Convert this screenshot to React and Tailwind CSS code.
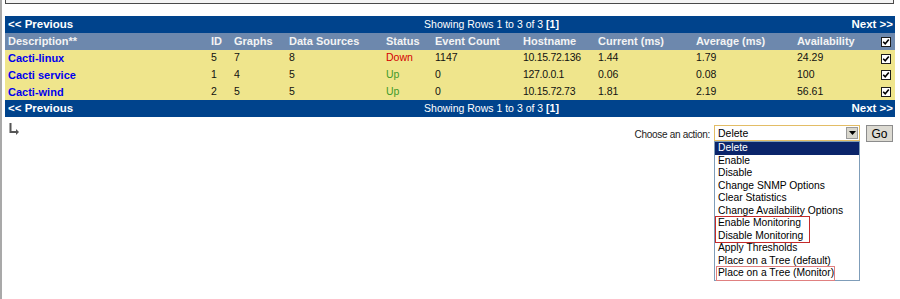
import { useState } from "react";

const rows = [
  { name: "Cacti-linux", id: 5, graphs: 7, ds: 8, status: "Down", events: "1147", host: "10.15.72.136", cur: "1.44", avg: "1.79", avail: "24.29" },
  { name: "Cacti service", id: 1, graphs: 4, ds: 5, status: "Up", events: "0", host: "127.0.0.1", cur: "0.06", avg: "0.08", avail: "100" },
  { name: "Cacti-wind", id: 2, graphs: 5, ds: 5, status: "Up", events: "0", host: "10.15.72.73", cur: "1.81", avg: "2.19", avail: "56.61" },
];

const actions = [
  "Delete",
  "Enable",
  "Disable",
  "Change SNMP Options",
  "Clear Statistics",
  "Change Availability Options",
];

const cols = [
  ["Description**", "w-[203px]"],
  ["ID", "w-[23px]"],
  ["Graphs", "w-[55px]"],
  ["Data Sources", "w-[97px]"],
  ["Status", "w-[49px]"],
  ["Event Count", "w-[88px]"],
  ["Hostname", "w-[75px]"],
  ["Current (ms)", "w-[98px]"],
  ["Average (ms)", "w-[101px]"],
  ["Availability", "w-[84px]"],
];

function Check() {
  return (
    <span className="inline-flex w-[10px] h-[10px] items-center justify-center bg-white border border-[#1c1c1c] align-middle">
      <svg width="8" height="8" viewBox="0 0 8 8">
        <path d="M1.2 3.8 L3.2 5.8 L6.8 1.6" fill="none" stroke="#000" strokeWidth="1.6" />
      </svg>
    </span>
  );
}

function NavBar() {
  return (
    <tr className="bg-[#00438C] h-[17px] text-white">
      <td colSpan={11} className="p-0">
        <div className="flex items-center h-[17px] whitespace-nowrap">
          <div className="w-[250px] pl-[3px] font-bold text-[11.5px]">&lt;&lt; Previous</div>
          <div className="w-[473px] text-center text-[10.5px]">
            Showing Rows 1 to 3 of 3 <span className="font-bold">[1]</span>
          </div>
          <div className="flex-1 text-right pr-[2px] font-bold text-[11.5px]">Next &gt;&gt;</div>
        </div>
      </td>
    </tr>
  );
}

export default function App() {
  const [selected] = useState(0);

  return (
    <div className="w-[900px] h-[299px] bg-white border-l-2 border-[#a9a9a9] pl-[3px] overflow-hidden font-['Liberation_Sans',Arial,sans-serif]">
      <div className="w-[889px] h-[4px] bg-[#f4f4f4] border-x border-b border-[#4a4a4a]" />

      <table className="mt-[12px] w-[890px] border-collapse table-fixed">
        <colgroup>
          {cols.map(([label, w]) => (
            <col key={label} className={w} />
          ))}
          <col className="w-[17px]" />
        </colgroup>
        <tbody>
          <NavBar />
          <tr className="bg-[#6D88AD] h-[17px] text-[#f4f4f4] text-[11px] font-bold text-left whitespace-nowrap">
            {cols.map(([label]) => (
              <th key={label} className="p-0 pl-[3px] font-bold">
                {label}
              </th>
            ))}
            <th className="p-0 pl-[3px] text-left">
              <Check />
            </th>
          </tr>
          {rows.map((r, i) => (
            <tr key={r.name} className={`bg-[#EFE58C] text-[10.5px] text-[#111] whitespace-nowrap ${i === 1 ? "h-[17px]" : "h-[16px]"}`}>
              <td className="p-0 pl-[3px] font-bold text-[11px] text-[#0000EE]">{r.name}</td>
              <td className="p-0 pl-[3px]">{r.id}</td>
              <td className="p-0 pl-[3px]">{r.graphs}</td>
              <td className="p-0 pl-[3px]">{r.ds}</td>
              <td className={`p-0 pl-[3px] ${r.status === "Down" ? "text-[#d40000]" : "text-[#3f9a2a]"}`}>{r.status}</td>
              <td className="p-0 pl-[3px]">{r.events}</td>
              <td className="p-0 pl-[3px] tracking-[-0.3px]">{r.host}</td>
              <td className="p-0 pl-[3px]">{r.cur}</td>
              <td className="p-0 pl-[3px]">{r.avg}</td>
              <td className="p-0 pl-[3px]">{r.avail}</td>
              <td className="p-0 pl-[3px]">
                <Check />
              </td>
            </tr>
          ))}
          <NavBar />
        </tbody>
      </table>

      <div className="flex items-start w-[888px]">
        <svg width="12" height="14" viewBox="0 0 12 14" className="ml-[4px] mt-[5px]">
          <path d="M1.5 1 V10 H8" fill="none" stroke="#555" strokeWidth="2" />
          <path d="M7 7 L10 10 L7 13 Z" fill="#555" />
        </svg>
        <div className="flex-1" />
        <div className="flex items-start mt-[8px]">
          <span className="text-[10px] tracking-[-0.3px] text-[#222] mt-[2px] mr-[4px] whitespace-nowrap">Choose an action:</span>
          <div className="relative w-[146px]">
            <div className="flex items-center h-[16px] border border-[#e3bd66] bg-white">
              <span className="flex-1 pl-[3px] text-[10.5px] leading-none text-black">Delete</span>
              <span className="w-[12px] h-[12px] mr-px flex items-center justify-center bg-[#d8d6cc] border border-[#9a9a9a]">
                <svg width="7" height="4" viewBox="0 0 7 4">
                  <path d="M0 0 H7 L3.5 4 Z" fill="#000" />
                </svg>
              </span>
            </div>
            <div className="absolute left-0 top-full w-[146px] bg-white border border-[#7f9db9] text-[10.3px] leading-[12.5px] text-black whitespace-nowrap">
              {actions.map((a, i) => (
                <div key={a} className={`pl-[3px] ${i === selected ? "bg-[#0A246A] text-white" : ""}`}>
                  {a}
                </div>
              ))}
              <div className="ml-[1px] w-[93px] outline outline-1 outline-[#c42a2a]">
                <div className="pl-[2px]">Enable Monitoring</div>
                <div className="pl-[2px]">Disable Monitoring</div>
              </div>
              <div className="pl-[3px]">Apply Thresholds</div>
              <div className="pl-[3px]">Place on a Tree (default)</div>
              <div className="ml-[2px] w-[117px] outline outline-1 outline-[#e08080]">
                <div className="pl-[1px]">Place on a Tree (Monitor)</div>
              </div>
            </div>
          </div>
          <button className="ml-[6px] w-[27px] h-[17px] bg-[#dcdad2] border border-[#8c8c8c] text-[12px] leading-none text-black">
            Go
          </button>
        </div>
      </div>
    </div>
  );
}
